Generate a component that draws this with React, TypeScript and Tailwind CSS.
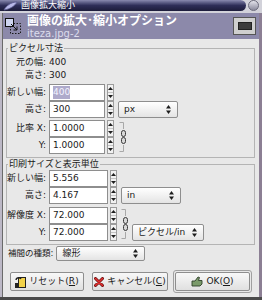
import React from "react";

function Spin() {
  return (
    <div className="flex h-full w-[7px] flex-col border border-[#9c9c9c] bg-[#f2f2f2]">
      <div className="flex flex-1 items-center justify-center border-b border-[#c4c4c4]">
        <svg width="5" height="3" viewBox="0 0 5 3">
          <path d="M0 3L2.5 0L5 3Z" fill="#1e1e1e" />
        </svg>
      </div>
      <div className="flex flex-1 items-center justify-center">
        <svg width="5" height="3" viewBox="0 0 5 3">
          <path d="M0 0L2.5 3L5 0Z" fill="#1e1e1e" />
        </svg>
      </div>
    </div>
  );
}

function Field({ value, w, selected }: { value: string; w: string; selected?: boolean }) {
  return (
    <div className="flex h-full items-stretch gap-[2px]">
      <div className={`flex items-center border border-[#8e8e8e] bg-white pl-[3px] text-[9px] ${w}`}>
        {selected ? <span className="bg-[#aeaacb] text-[#f4f4ff]">{value}</span> : <span>{value}</span>}
      </div>
      <Spin />
    </div>
  );
}

function Select({ label, w }: { label: string; w: string }) {
  return (
    <div
      className={`flex h-full items-center justify-between rounded-[2px] border border-[#8e8e8e] bg-gradient-to-b from-white to-[#e4e4e4] pl-[5px] pr-[6px] text-[9px] ${w}`}
    >
      <span className="whitespace-nowrap">{label}</span>
      <svg width="5" height="9" viewBox="0 0 5 9">
        <path d="M0 3.5L2.5 0L5 3.5Z" fill="#1e1e1e" />
        <path d="M0 5.5L2.5 9L5 5.5Z" fill="#1e1e1e" />
      </svg>
    </div>
  );
}

function Chain() {
  return (
    <svg width="8" height="30" viewBox="0 0 8 30">
      <path d="M0.5 0.5H4.5V7" stroke="#a8a8a8" fill="none" />
      <path d="M0.5 29.5H4.5V23" stroke="#a8a8a8" fill="none" />
      <rect x="2.5" y="8.5" width="4" height="6" rx="2" stroke="#3a3a3a" fill="#d8d8d8" />
      <rect x="2.5" y="15.5" width="4" height="6" rx="2" stroke="#3a3a3a" fill="#d8d8d8" />
    </svg>
  );
}

function Label({ children }: { children: React.ReactNode }) {
  return <div className="w-[42px] shrink-0 whitespace-nowrap pr-[3px] text-right text-[9px]">{children}</div>;
}

export default function App() {
  return (
    <div className="flex h-[300px] w-[262px] flex-col overflow-hidden bg-[#e8e8e8] font-['DejaVu_Sans','Noto_Sans_CJK_JP',sans-serif] text-[#1a1a1a]">
      {/* Title bar */}
      <div className="flex h-[13px] shrink-0 items-start bg-[#d2d2da]">
        <div className="flex h-[11px] flex-1 items-center rounded-r-[6px] bg-gradient-to-b from-[#8a8ab0] via-[#2e2e58] to-[#1c1c3a] pl-[2px]">
          <svg width="16" height="10" viewBox="0 0 16 10">
            <path d="M2 9C4 5 9 1 15 1C13 5 8 8 2 9Z" fill="#b8b8e8" stroke="#5a5a90" strokeWidth="0.8" />
          </svg>
          <span className="ml-[3px] text-[9px] leading-none text-white">画像拡大縮小</span>
        </div>
        <div className="ml-[2px] mr-[3px] h-[11px] w-[11px] rounded-full border border-[#6a6a7a] bg-gradient-to-b from-[#e4e4ec] to-[#8a8a9c]" />
      </div>

      <div className="flex flex-1">
        <div className="w-[3px] shrink-0 border-r border-[#6a6a6a] bg-[#bcb8c6]" />

        <div className="flex flex-1 flex-col">
          {/* Header */}
          <div className="flex h-[26px] shrink-0 items-center bg-[#8c89aa] pl-[2px] pr-[3px]">
            <svg width="17" height="17" viewBox="0 0 17 17">
              <rect x="5.5" y="5.5" width="10" height="10" fill="none" stroke="#1a1a1a" strokeDasharray="1.5 1.5" />
              <rect x="0.5" y="0.5" width="8" height="8" fill="#cfd6f0" stroke="#111" />
              <path d="M6 6L12 12M12 12V8.5M12 12H8.5" stroke="#111" fill="none" />
            </svg>
            <div className="ml-[5px] flex flex-1 flex-col">
              <span className="text-[12px] font-bold leading-[14px] text-white">画像の拡大･縮小オプション</span>
              <span className="text-[10px] leading-[11px] text-[#dcdcec]">iteza.jpg-2</span>
            </div>
            <div className="flex h-[18px] w-[23px] items-center justify-center border border-[#555] bg-[#cfcfcf]">
              <div className="h-[8px] w-[14px] border border-[#222] bg-[#3c3c3c]" />
            </div>
          </div>

          {/* Body */}
          <div className="flex flex-1 flex-col">
            <fieldset className="ml-[3px] mr-[4px] mt-[4px] border border-[#b4b4b4] pb-[3px]">
              <legend className="ml-[1px] px-[1px] text-[9px] leading-[11px]">ピクセル寸法</legend>
              <div className="mt-[2px] flex h-[13px] items-center">
                <Label>元の幅:</Label>
                <span className="text-[9px]">400</span>
              </div>
              <div className="flex h-[13px] items-center">
                <Label>高さ:</Label>
                <span className="text-[9px]">300</span>
              </div>
              <div className="mt-[2px] flex h-[17px] items-center">
                <Label>新しい幅:</Label>
                <Field value="400" w="w-[56px]" selected />
              </div>
              <div className="flex h-[17px] items-center">
                <Label>高さ:</Label>
                <Field value="300" w="w-[56px]" />
                <div className="ml-[4px] h-full">
                  <Select label="px" w="w-[60px]" />
                </div>
              </div>
              <div className="mt-[2px] flex items-center">
                <div className="flex flex-col">
                  <div className="flex h-[17px] items-center">
                    <Label>比率 X:</Label>
                    <Field value="1.0000" w="w-[56px]" />
                  </div>
                  <div className="flex h-[17px] items-center">
                    <Label>Y:</Label>
                    <Field value="1.0000" w="w-[56px]" />
                  </div>
                </div>
                <div className="ml-[5px]">
                  <Chain />
                </div>
              </div>
            </fieldset>

            <fieldset className="ml-[3px] mr-[4px] mt-[1px] border border-[#b4b4b4] pb-[3px]">
              <legend className="ml-[1px] px-[1px] text-[9px] leading-[11px]">印刷サイズと表示単位</legend>
              <div className="flex h-[17px] items-center">
                <Label>新しい幅:</Label>
                <Field value="5.556" w="w-[59px]" />
              </div>
              <div className="flex h-[17px] items-center">
                <Label>高さ:</Label>
                <Field value="4.167" w="w-[59px]" />
                <div className="ml-[4px] h-full">
                  <Select label="in" w="w-[60px]" />
                </div>
              </div>
              <div className="mt-[3px] flex items-end">
                <div className="flex flex-col">
                  <div className="flex h-[17px] items-center">
                    <Label>解像度 X:</Label>
                    <Field value="72.000" w="w-[59px]" />
                  </div>
                  <div className="flex h-[17px] items-center">
                    <Label>Y:</Label>
                    <Field value="72.000" w="w-[59px]" />
                  </div>
                </div>
                <div className="mb-[2px] ml-[4px]">
                  <Chain />
                </div>
                <div className="ml-[3px] h-[17px]">
                  <Select label="ピクセル/in" w="w-[72px]" />
                </div>
              </div>
            </fieldset>

            <div className="mt-[1px] flex h-[15px] items-center pl-[5px]">
              <span className="whitespace-nowrap text-[8.5px]">補間の種類:</span>
              <div className="ml-[3px] h-full">
                <Select label="線形" w="w-[89px]" />
              </div>
            </div>

            {/* Buttons */}
            <div className="mt-[9px] flex items-center pl-[7px]">
              <div className="flex h-[19px] w-[74px] items-center justify-center gap-[3px] whitespace-nowrap rounded-[2px] border border-[#8e8e8e] bg-gradient-to-b from-[#f8f8f8] to-[#e0e0e0] text-[9px]">
                <svg width="11" height="12" viewBox="0 0 11 12">
                  <rect x="3.5" y="1.5" width="7" height="10" fill="#f2d24a" stroke="#222" />
                  <path d="M1 4C1 1.5 5 1 6 3" stroke="#222" strokeWidth="1.4" fill="none" />
                  <rect x="0" y="7" width="4" height="5" fill="#222" />
                </svg>
                <span>
                  リセット(<span className="underline">R</span>)
                </span>
              </div>
              <div className="ml-[8px] flex h-[19px] w-[76px] items-center justify-center gap-[3px] whitespace-nowrap rounded-[2px] border border-[#8e8e8e] bg-gradient-to-b from-[#f8f8f8] to-[#e0e0e0] text-[9px]">
                <svg width="10" height="10" viewBox="0 0 10 10">
                  <path d="M1.5 1.5L8.5 8.5M8.5 1.5L1.5 8.5" stroke="#6a1010" strokeWidth="3" strokeLinecap="round" />
                  <path d="M1.5 1.5L8.5 8.5M8.5 1.5L1.5 8.5" stroke="#e03030" strokeWidth="1.6" strokeLinecap="round" />
                </svg>
                <span>
                  キャンセル(<span className="underline">C</span>)
                </span>
              </div>
              <div className="ml-[5px] rounded-[3px] border border-[#a0a0a0] p-[1px]">
                <div className="flex h-[19px] w-[75px] items-center justify-center gap-[3px] whitespace-nowrap rounded-[2px] border border-[#8e8e8e] bg-gradient-to-b from-[#f8f8f8] to-[#e0e0e0] text-[9px]">
                  <svg width="12" height="11" viewBox="0 0 12 11">
                    <path d="M1 10L1 5L4 5L7 1L8.5 1.5L7.5 4.5L11 4.5L11 8L9 10Z" fill="#7a9a6a" stroke="#2e3e28" strokeWidth="0.9" />
                  </svg>
                  <span>
                    OK(<span className="underline">O</span>)
                  </span>
                </div>
              </div>
            </div>
          </div>
        </div>

        <div className="w-[3px] shrink-0 bg-[#8c7f94]" />
      </div>
      <div className="h-[3px] shrink-0 bg-[#4a4a4a]" />
    </div>
  );
}
